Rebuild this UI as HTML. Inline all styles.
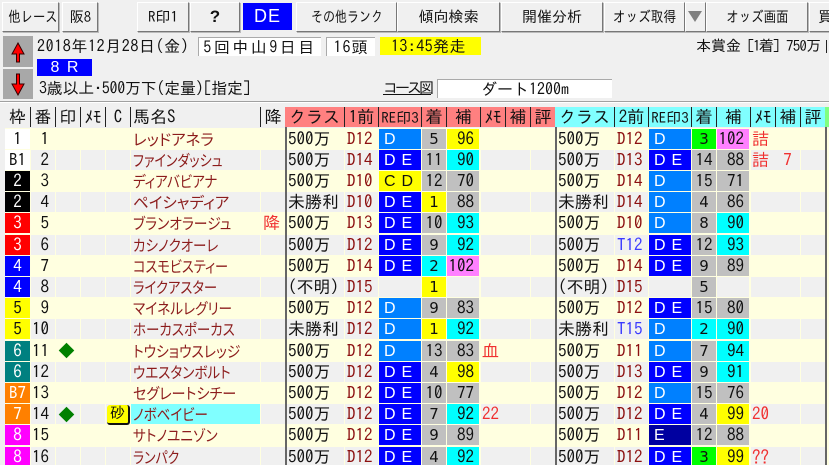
<!DOCTYPE html>
<html lang="ja"><head><meta charset="utf-8"><title>R</title>
<style>
html,body{margin:0;padding:0}
body{width:829px;height:465px;overflow:hidden;position:relative;background:#f0f0f0;font-family:"IPAGothic","Noto Sans CJK JP","Liberation Sans",monospace;font-size:16px;color:#111}
.x{position:absolute;white-space:nowrap}
#w{position:absolute;left:0;top:0;width:829px;height:465px;overflow:hidden;filter:blur(.35px)}
.b{position:absolute;top:2px;height:28px;line-height:28px;text-align:center;background:#f0f0f0;border:1px solid;border-color:#fff #777 #777 #fff;box-shadow:1px 1px 0 #bbb;box-sizing:content-box;white-space:nowrap;overflow:hidden;font-size:15px}
b{font-weight:normal;display:inline-block;white-space:nowrap}
.t{position:absolute;height:18px;line-height:18px;background:#fff;white-space:nowrap;text-align:center;border-top:1px solid #aaa;border-left:1px solid #aaa}
#tb{position:absolute;left:5px;top:128px;width:824px;height:337px;background:#ffffe0}
.r{position:absolute;left:0;width:829px;height:20px;font-size:17px;line-height:21px}
.r i,.H i{position:absolute;top:0;height:20px;font-style:normal;white-space:nowrap;overflow:hidden;text-align:center}
.e i{background:#f0f0f0}
i.w{left:5px;width:25px}
i.n{left:31px;width:24px;text-align:right;padding-right:6px;box-sizing:border-box}
i.m{left:56px;width:24px}
i.o{left:81px;width:24px}
i.k{left:106px;width:24px}
i.h{left:131px;width:129px;text-align:left;padding-left:2px;box-sizing:border-box;color:#8c1c1c;font-family:"Noto Sans CJK JP",sans-serif;font-feature-settings:"palt";font-size:15.5px;line-height:20px}
i.h b{transform-origin:0 50%}
i.f{left:261px;width:24px;color:#f03030;text-align:left;padding-left:2px;box-sizing:border-box}
.g{position:absolute;top:0;left:285px;width:270px;height:20px}
.g2{left:555px}
i.a{left:2px;width:57px;text-align:left;padding-left:1px;box-sizing:border-box}
i.p{left:60px;width:33px;color:#8c1010;text-align:left;padding-left:2px;box-sizing:border-box}
i.p.u{color:#3a3aff}
i.q{left:94px;width:41.5px;background:#ffffe0;text-align:left;padding-left:5px;box-sizing:border-box;font-family:"Liberation Sans",sans-serif;font-size:16px;color:#fff;word-spacing:1.5px;line-height:21px}
i.c{left:137px;width:24px}
i.s{left:162px;width:32px;text-align:right;padding-right:5px;box-sizing:border-box}
i.d{left:196px;width:24px;color:#f03030;text-align:left;padding-left:1px;box-sizing:border-box}
i.j{left:220px;width:25px;color:#f03030}
i.l{left:246px;width:24px}
i.D{background:#0080ff!important}
i.B{background:#0000ff!important}
i.Y{background:#ffff00!important;color:#111!important}
i.N{background:#0000a0!important}
i.G{background:#c0c0c0!important}
i.C{background:#00ffff!important}
i.M{background:#ff80ff!important}
i.V{background:#00ff00!important}
i.c.z{font-family:"DejaVu Sans",sans-serif;font-size:15px}
i.f1{background:#fff!important;text-align:center}
i.f2{background:#000!important;color:#fff}
i.f3{background:#ff0000!important;color:#fff}
i.f4{background:#0000ff!important;color:#fff}
i.f5{background:#ffff00!important}
i.f6{background:#008080!important;color:#fff}
i.f7{background:#ff8000!important;color:#fff}
i.f8{background:#ff00ff!important;color:#fff}
.H{position:absolute;left:0;top:107px;width:829px;height:20px;font-size:17px;line-height:21px}
.H i{border-right:1px solid #222;box-sizing:border-box;height:20px}
.H .g i{background:#ff8080}
.H .g2 i{background:#80ffff}
.L{position:absolute;top:107px;width:2px;height:358px;background:#666}
.dia{position:absolute;left:60.5px;width:11px;height:11px;background:#008000;transform:rotate(45deg)}
</style></head><body><div id="w">

<div class="b" style="left:2px;width:55px"><b style="transform:scaleX(.82)">他レース</b></div>
<div class="b" style="left:62px;width:34px"><b style="transform:scaleX(.95)">阪8</b></div>
<div class="b" style="left:137px;width:50px">R印1</div>
<div class="b" style="left:190px;width:48px;font:bold 17px 'Liberation Sans',sans-serif;line-height:28px">?</div>
<div class="x" style="left:243px;top:3px;width:49px;height:27px;background:#0000ff;color:#fff;font:18px/27px 'Liberation Sans',sans-serif;text-align:center;letter-spacing:1px">DE</div>
<div class="b" style="left:296px;width:99px"><b style="transform:scaleX(.8)">その他ランク</b></div>
<div class="b" style="left:397px;width:101px">傾向検索</div>
<div class="b" style="left:501px;width:100px">開催分析</div>
<div class="b" style="left:604px;width:79px"><b style="transform:scaleX(.84)">オッズ取得</b></div>
<div class="b" style="left:685px;width:19px"></div>
<svg class="x" style="left:687px;top:10px" width="16" height="13"><path d="M1 1H15L8 12Z" fill="#808080"/></svg>
<div class="b" style="left:706px;width:100px"><b style="transform:scaleX(.83)">オッズ画面</b></div>
<div class="b" style="left:809px;width:40px;text-align:left;padding-left:8px">買</div>

<div class="x" style="left:3px;top:36px;width:30px;height:31px;background:#a8a8a8"></div>
<div class="x" style="left:3px;top:69px;width:30px;height:30px;background:#a8a8a8"></div>
<svg class="x" style="left:10px;top:42px" width="16" height="54"><path d="M8 1L14 12H9.5V20H6.5V12H2Z" fill="#f00" stroke="#300" stroke-width="1"/><path d="M6.5 32H9.5V42H14L8 53L2 42H6.5Z" fill="#f00" stroke="#300" stroke-width="1"/></svg>

<div class="x" style="left:37px;top:37px;line-height:18px;font-size:16px;letter-spacing:.6px">2018年12月28日(金)</div>
<div class="t" style="left:198px;top:37px;width:122px;letter-spacing:2.5px">5回中山9日目</div>
<div class="t" style="left:326px;top:37px;width:48px;letter-spacing:1px">16頭</div>
<div class="x" style="left:380px;top:37px;width:101px;height:18px;line-height:18px;background:#ffff00;padding-left:11px;box-sizing:border-box;letter-spacing:.4px">13:45発走</div>
<div class="x" style="left:37px;top:59px;width:55px;height:17px;background:#0000ff;color:#fff;font:16px/17px 'Liberation Sans',sans-serif;text-align:center;word-spacing:3px">8 R</div>
<div class="x" style="left:39px;top:79px;line-height:18px;font-size:16px;letter-spacing:-.25px">3歳以上･500万下(定量)[指定]</div>
<div class="x" style="left:383px;top:79px;line-height:18px;font-size:15px;text-decoration:underline;letter-spacing:-3px">コース図</div>
<div class="t" style="left:437px;top:79px;width:174px">ダート1200m</div>
<div class="x" style="left:696px;top:37px;line-height:18px;font-size:15px">本賞金</div>
<div class="x" style="left:747px;top:37px;line-height:18px;font-size:15px;letter-spacing:-1.5px">[1着]</div>
<div class="x" style="left:786px;top:37px;line-height:18px;font-size:15px;letter-spacing:-.8px">750万</div>
<div class="x" style="left:826px;top:40px;width:1px;height:13px;background:#222"></div>
<div class="x" style="left:0;top:101px;width:829px;height:1px;background:#a0a0a0"></div>
<div class="x" style="left:0;top:102px;width:829px;height:1px;background:#fff"></div>

<div class="H">
<i style="left:5px;width:26px;background:#f0f0f0">枠</i><i style="left:31px;width:25px;background:#f0f0f0">番</i><i style="left:56px;width:25px;background:#f0f0f0">印</i><i style="left:81px;width:25px;background:#f0f0f0">ﾒﾓ</i><i style="left:106px;width:25px;background:#f0f0f0">C</i><i style="left:131px;width:130px;background:#f0f0f0;text-align:left;padding-left:2px">馬名S</i><i style="left:261px;width:24px;background:#f0f0f0;border:0">降</i>
<div class="g"><i style="left:0;width:60px">クラス</i><i style="left:60px;width:34px">1前</i><i style="left:94px;width:43px;font-size:15px">RE印3</i><i style="left:137px;width:25px">着</i><i style="left:162px;width:34px">補</i><i style="left:196px;width:25px">ﾒﾓ</i><i style="left:221px;width:25px">補</i><i style="left:246px;width:24px;border:0">評</i></div>
<div class="g g2"><i style="left:0;width:60px">クラス</i><i style="left:60px;width:34px">2前</i><i style="left:94px;width:43px;font-size:15px">RE印3</i><i style="left:137px;width:25px">着</i><i style="left:162px;width:34px">補</i><i style="left:196px;width:25px">ﾒﾓ</i><i style="left:221px;width:25px">補</i><i style="left:246px;width:24px;border:0">評</i></div>
<i style="left:825px;width:4px;background:#80ff80;border:0"></i>
</div>

<div id="tb"></div>

<div class="r" style="top:129px"><i class="w f1">1</i><i class="n">1</i><i class="m"></i><i class="o"></i><i class="k"></i><i class="h"><b>レッドアネラ</b></i><i class="f"></i>
<div class="g"><i class="a">500万</i><i class="p">D12</i><i class="q D">D</i><i class="c z G">5</i><i class="s Y">96</i><i class="d"></i><i class="j"></i><i class="l"></i></div>
<div class="g g2"><i class="a">500万</i><i class="p">D12</i><i class="q D">D</i><i class="c z V">3</i><i class="s M">102</i><i class="d">詰</i><i class="j"></i><i class="l"></i></div></div>

<div class="r e" style="top:150px"><i class="w f1">B1</i><i class="n">2</i><i class="m"></i><i class="o"></i><i class="k"></i><i class="h"><b style="transform:scaleX(.84)">ファインダッシュ</b></i><i class="f"></i>
<div class="g"><i class="a">500万</i><i class="p">D14</i><i class="q B">D E</i><i class="c G">11</i><i class="s C">90</i><i class="d"></i><i class="j"></i><i class="l"></i></div>
<div class="g g2"><i class="a">500万</i><i class="p">D13</i><i class="q B">D E</i><i class="c G">14</i><i class="s G">88</i><i class="d">詰</i><i class="j">7</i><i class="l"></i></div></div>

<div class="r" style="top:171px"><i class="w f2">2</i><i class="n">3</i><i class="m"></i><i class="o"></i><i class="k"></i><i class="h"><b style="transform:scaleX(.87)">ディアバビアナ</b></i><i class="f"></i>
<div class="g"><i class="a">500万</i><i class="p">D10</i><i class="q Y">C D</i><i class="c G">12</i><i class="s G">70</i><i class="d"></i><i class="j"></i><i class="l"></i></div>
<div class="g g2"><i class="a">500万</i><i class="p">D14</i><i class="q D">D</i><i class="c G">15</i><i class="s G">71</i><i class="d"></i><i class="j"></i><i class="l"></i></div></div>

<div class="r e" style="top:192px"><i class="w f2">2</i><i class="n">4</i><i class="m"></i><i class="o"></i><i class="k"></i><i class="h"><b>ペイシャディア</b></i><i class="f"></i>
<div class="g"><i class="a">未勝利</i><i class="p">D10</i><i class="q B">D E</i><i class="c z Y">1</i><i class="s G">88</i><i class="d"></i><i class="j"></i><i class="l"></i></div>
<div class="g g2"><i class="a">未勝利</i><i class="p">D14</i><i class="q D">D</i><i class="c z G">4</i><i class="s G">86</i><i class="d"></i><i class="j"></i><i class="l"></i></div></div>

<div class="r" style="top:213px"><i class="w f3">3</i><i class="n">5</i><i class="m"></i><i class="o"></i><i class="k"></i><i class="h"><b style="transform:scaleX(.89)">ブランオラージュ</b></i><i class="f">降</i>
<div class="g"><i class="a">500万</i><i class="p">D13</i><i class="q B">D E</i><i class="c G">10</i><i class="s C">93</i><i class="d"></i><i class="j"></i><i class="l"></i></div>
<div class="g g2"><i class="a">500万</i><i class="p">D10</i><i class="q D">D</i><i class="c z G">8</i><i class="s C">90</i><i class="d"></i><i class="j"></i><i class="l"></i></div></div>

<div class="r e" style="top:235px"><i class="w f3">3</i><i class="n">6</i><i class="m"></i><i class="o"></i><i class="k"></i><i class="h"><b style="transform:scaleX(.87)">カシノクオーレ</b></i><i class="f"></i>
<div class="g"><i class="a">500万</i><i class="p">D12</i><i class="q B">D E</i><i class="c z G">9</i><i class="s C">92</i><i class="d"></i><i class="j"></i><i class="l"></i></div>
<div class="g g2"><i class="a">500万</i><i class="p u">T12</i><i class="q B">D E</i><i class="c G">12</i><i class="s C">93</i><i class="d"></i><i class="j"></i><i class="l"></i></div></div>

<div class="r" style="top:256px"><i class="w f4">4</i><i class="n">7</i><i class="m"></i><i class="o"></i><i class="k"></i><i class="h"><b style="transform:scaleX(.85)">コスモビスティー</b></i><i class="f"></i>
<div class="g"><i class="a">500万</i><i class="p">D14</i><i class="q B">D E</i><i class="c z C">2</i><i class="s M">102</i><i class="d"></i><i class="j"></i><i class="l"></i></div>
<div class="g g2"><i class="a">500万</i><i class="p">D14</i><i class="q B">D E</i><i class="c z G">9</i><i class="s G">89</i><i class="d"></i><i class="j"></i><i class="l"></i></div></div>

<div class="r e" style="top:277px"><i class="w f4">4</i><i class="n">8</i><i class="m"></i><i class="o"></i><i class="k"></i><i class="h"><b style="transform:scaleX(.86)">ライクアスター</b></i><i class="f"></i>
<div class="g"><i class="a">(不明)</i><i class="p">D15</i><i class="q" style="background:#f0f0f0"></i><i class="c z Y">1</i><i class="s"></i><i class="d"></i><i class="j"></i><i class="l"></i></div>
<div class="g g2"><i class="a">(不明)</i><i class="p">D15</i><i class="q" style="background:#f0f0f0"></i><i class="c z G">5</i><i class="s"></i><i class="d"></i><i class="j"></i><i class="l"></i></div></div>

<div class="r" style="top:298px"><i class="w f5">5</i><i class="n">9</i><i class="m"></i><i class="o"></i><i class="k"></i><i class="h"><b style="transform:scaleX(.88)">マイネルレグリー</b></i><i class="f"></i>
<div class="g"><i class="a">500万</i><i class="p">D12</i><i class="q D">D</i><i class="c z G">9</i><i class="s G">83</i><i class="d"></i><i class="j"></i><i class="l"></i></div>
<div class="g g2"><i class="a">500万</i><i class="p">D12</i><i class="q B">D E</i><i class="c G">15</i><i class="s G">80</i><i class="d"></i><i class="j"></i><i class="l"></i></div></div>

<div class="r e" style="top:319px"><i class="w f5">5</i><i class="n">10</i><i class="m"></i><i class="o"></i><i class="k"></i><i class="h"><b style="transform:scaleX(.87)">ホーカスポーカス</b></i><i class="f"></i>
<div class="g"><i class="a">未勝利</i><i class="p">D12</i><i class="q D">D</i><i class="c z Y">1</i><i class="s C">92</i><i class="d"></i><i class="j"></i><i class="l"></i></div>
<div class="g g2"><i class="a">未勝利</i><i class="p u">T15</i><i class="q D">D</i><i class="c z C">2</i><i class="s C">90</i><i class="d"></i><i class="j"></i><i class="l"></i></div></div>

<div class="r" style="top:341px"><i class="w f6">6</i><i class="n">11</i><i class="m"></i><i class="o"></i><i class="k"></i><i class="h"><b style="transform:scaleX(.89)">トウショウスレッジ</b></i><i class="f"></i>
<div class="g"><i class="a">500万</i><i class="p">D12</i><i class="q D">D</i><i class="c G">13</i><i class="s G">83</i><i class="d">血</i><i class="j"></i><i class="l"></i></div>
<div class="g g2"><i class="a">500万</i><i class="p">D11</i><i class="q D">D</i><i class="c z G">7</i><i class="s C">94</i><i class="d"></i><i class="j"></i><i class="l"></i></div></div>

<div class="r e" style="top:362px"><i class="w f6">6</i><i class="n">12</i><i class="m"></i><i class="o"></i><i class="k"></i><i class="h"><b style="transform:scaleX(.875)">ウエスタンボルト</b></i><i class="f"></i>
<div class="g"><i class="a">500万</i><i class="p">D12</i><i class="q B">D E</i><i class="c z G">4</i><i class="s Y">98</i><i class="d"></i><i class="j"></i><i class="l"></i></div>
<div class="g g2"><i class="a">500万</i><i class="p">D13</i><i class="q B">D E</i><i class="c z G">9</i><i class="s C">91</i><i class="d"></i><i class="j"></i><i class="l"></i></div></div>

<div class="r" style="top:383px"><i class="w f7">B7</i><i class="n">13</i><i class="m"></i><i class="o"></i><i class="k"></i><i class="h"><b style="transform:scaleX(.91)">セグレートシチー</b></i><i class="f"></i>
<div class="g"><i class="a">500万</i><i class="p">D12</i><i class="q B">D E</i><i class="c G">10</i><i class="s G">77</i><i class="d"></i><i class="j"></i><i class="l"></i></div>
<div class="g g2"><i class="a">500万</i><i class="p">D12</i><i class="q D">D</i><i class="c G">15</i><i class="s G">76</i><i class="d"></i><i class="j"></i><i class="l"></i></div></div>

<div class="r e" style="top:404px"><i class="w f7">7</i><i class="n">14</i><i class="m"></i><i class="o"></i><i class="k"></i><i class="h" style="background:#80ffff"><b style="transform:scaleX(.87)">ノボベイビー</b></i><i class="f"></i>
<div class="g"><i class="a">500万</i><i class="p">D12</i><i class="q B">D E</i><i class="c z G">7</i><i class="s C">92</i><i class="d">22</i><i class="j"></i><i class="l"></i></div>
<div class="g g2"><i class="a">500万</i><i class="p">D12</i><i class="q B">D E</i><i class="c z G">4</i><i class="s Y">99</i><i class="d">20</i><i class="j"></i><i class="l"></i></div></div>

<div class="r" style="top:425px"><i class="w f8">8</i><i class="n">15</i><i class="m"></i><i class="o"></i><i class="k"></i><i class="h"><b style="transform:scaleX(.88)">サトノユニゾン</b></i><i class="f"></i>
<div class="g"><i class="a">500万</i><i class="p">D12</i><i class="q B">D E</i><i class="c z G">9</i><i class="s G">89</i><i class="d"></i><i class="j"></i><i class="l"></i></div>
<div class="g g2"><i class="a">500万</i><i class="p">D11</i><i class="q N">E</i><i class="c G">12</i><i class="s G">88</i><i class="d"></i><i class="j"></i><i class="l"></i></div></div>

<div class="r e" style="top:447px"><i class="w f8">8</i><i class="n">16</i><i class="m"></i><i class="o"></i><i class="k"></i><i class="h"><b style="transform:scaleX(.83)">ランパク</b></i><i class="f"></i>
<div class="g"><i class="a">500万</i><i class="p">D12</i><i class="q B">D E</i><i class="c z G">4</i><i class="s C">92</i><i class="d"></i><i class="j"></i><i class="l"></i></div>
<div class="g g2"><i class="a">500万</i><i class="p">D12</i><i class="q B">D E</i><i class="c z V">3</i><i class="s Y">99</i><i class="d">??</i><i class="j"></i><i class="l"></i></div></div>

<div class="dia" style="top:345px"></div>
<div class="dia" style="top:409px"></div>
<div class="x" style="left:107px;top:405px;width:21px;height:18px;background:#ffff00;border-right:2px solid #111;border-bottom:2px solid #111;border-radius:3px;font-size:15px;line-height:16px;text-align:center">砂</div>

<div class="L" style="left:285px;top:127px;height:338px"></div>
<div class="L" style="left:555px;top:127px;height:338px"></div>
<div class="L" style="left:825px;top:127px;height:338px"></div>
</div></body></html>
